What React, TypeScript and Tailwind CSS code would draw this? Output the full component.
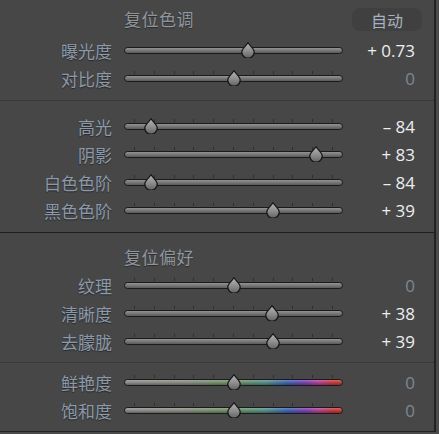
import React from "react"

interface SliderRow {
  label: string
  value: number
  text: string
  scale?: number
  ticks?: boolean
  color?: boolean
}

const cjk = "font-['Noto_Sans_CJK_SC','Noto_Sans',sans-serif]"
const num = "font-['Open_Sans','Liberation_Sans',sans-serif]"

const TICKS = [0, 1, 2, 3, 4, 5, 6, 7, 8, 9, 10]

function Thumb({ left }: { left: number }) {
  return (
    <svg
      className="absolute top-[6px]"
      style={{ left: left - 7 }}
      width="14"
      height="16"
      viewBox="0 0 14 16"
    >
      <defs>
        <linearGradient id="thumbFill" x1="0" y1="0" x2="0" y2="1">
          <stop offset="0%" stopColor="#b4b4b4" />
          <stop offset="55%" stopColor="#8c8c8c" />
          <stop offset="100%" stopColor="#626262" />
        </linearGradient>
      </defs>
      <path
        d="M7 0.8 C8.6 3.6 13.2 6.6 13.2 10 A6.2 6.2 0 0 1 0.8 10 C0.8 6.6 5.4 3.6 7 0.8 Z"
        fill="url(#thumbFill)"
        stroke="#161616"
        strokeWidth="1.3"
      />
    </svg>
  )
}

function Slider({ row }: { row: SliderRow }) {
  const pos = 110 + (row.value * 99) / (row.scale ?? 100)
  const zero = row.text === "0"
  return (
    <div className="flex h-[28px] items-center">
      <div
        className={`w-[112px] text-right text-[17px] leading-none text-[#8b99ab] [text-shadow:0_1px_1px_rgba(0,0,0,0.45)] ${cjk}`}
      >
        {row.label}
      </div>
      <div className="relative ml-[12px] flex h-[28px] w-[219px] items-center">
        {row.ticks !== false &&
          TICKS.map((i) => (
            <div
              key={i}
              className="absolute top-[7px] h-[3px] w-px bg-[#2f2f2f]"
              style={{ left: 10 + i * 19.8 }}
            />
          ))}
        {row.color ? (
          <div className="h-[7px] w-full overflow-hidden rounded-[4px] border border-[#1b1b1b] bg-[linear-gradient(to_right,#8a8a8a_0%,#868a80_28%,#6c905f_50%,#4f8f86_65%,#3c62b2_75%,#7a3fb6_83%,#b03e98_89%,#c83838_96%)]">
            <div className="h-full w-full bg-gradient-to-b from-white/25 via-transparent to-black/30" />
          </div>
        ) : (
          <div className="h-[7px] w-full rounded-[4px] border border-[#1b1b1b] bg-gradient-to-b from-[#949494] via-[#777777] to-[#5a5a5a]" />
        )}
        <Thumb left={pos} />
      </div>
      <div
        className={`w-[72px] text-right text-[17px] leading-none ${num} ${
          zero ? "text-[#7d8793]" : "text-[#eceef0]"
        }`}
      >
        {row.text}
      </div>
    </div>
  )
}

const toneA: SliderRow[] = [
  { label: "曝光度", value: 0.73, scale: 5, text: "+ 0.73", ticks: false },
  { label: "对比度", value: 0, text: "0" },
]

const toneB: SliderRow[] = [
  { label: "高光", value: -84, text: "– 84" },
  { label: "阴影", value: 83, text: "+ 83" },
  { label: "白色色阶", value: -84, text: "– 84" },
  { label: "黑色色阶", value: 39, text: "+ 39" },
]

const presence: SliderRow[] = [
  { label: "纹理", value: 0, text: "0" },
  { label: "清晰度", value: 38, text: "+ 38" },
  { label: "去朦胧", value: 39, text: "+ 39" },
]

const colorRows: SliderRow[] = [
  { label: "鲜艳度", value: 0, text: "0", color: true },
  { label: "饱和度", value: 0, text: "0", color: true },
]

export default function App() {
  return (
    <div className="h-[434px] w-[439px] bg-[#4a4a4a]">
      <div className="flex h-[432px] w-[436px] flex-col border-r-2 border-b border-[#222222] bg-[#474747]">
        {/* tone */}
        <div className="pb-[8px]">
          <div className="flex h-[36px] items-center">
            <span
              className={`ml-[124px] text-[17px] leading-none tracking-[0.5px] text-[#8f969e] [text-shadow:0_1px_1px_rgba(0,0,0,0.4)] ${cjk}`}
            >
              复位色调
            </span>
            <div className="flex-1" />
            <div
              className={`mr-[12px] mt-[3px] flex h-[23px] w-[70px] items-center justify-center rounded-[8px] bg-[#404040] text-[16px] leading-none text-[#a6b2bf] ${cjk}`}
            >
              自动
            </div>
          </div>
          {toneA.map((r) => (
            <Slider key={r.label} row={r} />
          ))}
        </div>
        <div className="h-px bg-[#393939]" />

        <div className="pt-[11px] pb-[8px]">
          {toneB.map((r) => (
            <Slider key={r.label} row={r} />
          ))}
        </div>
        <div className="h-px bg-[#1f1f1f]" />

        {/* presence */}
        <div className="pt-[8px] pb-[7px]">
          <div className="flex h-[30px] items-center">
            <span
              className={`ml-[124px] text-[17px] leading-none tracking-[0.5px] text-[#8f969e] [text-shadow:0_1px_1px_rgba(0,0,0,0.4)] ${cjk}`}
            >
              复位偏好
            </span>
          </div>
          {presence.map((r) => (
            <Slider key={r.label} row={r} />
          ))}
        </div>
        <div className="h-px bg-[#393939]" />

        <div className="pt-[5px]">
          {colorRows.map((r) => (
            <Slider key={r.label} row={r} />
          ))}
        </div>
      </div>
    </div>
  )
}
